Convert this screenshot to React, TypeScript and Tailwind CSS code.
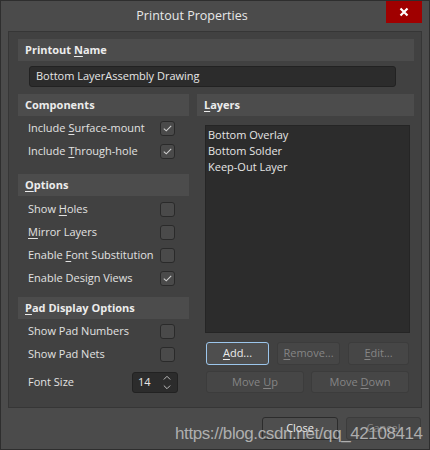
import type { ReactNode } from "react";

const FONT = { fontFamily: '"Open Sans", "Noto Sans", sans-serif' };

function U({ children }: { children: ReactNode }) {
  return <span className="underline decoration-1 underline-offset-[2px]">{children}</span>;
}

function Header({ children }: { children: ReactNode }) {
  return (
    <div className="h-[22px] bg-[#4c4c4c] flex items-center pl-[7px] text-[11px] font-bold text-[#ececec]">
      <span>{children}</span>
    </div>
  );
}

function Check({ checked }: { checked?: boolean }) {
  return (
    <div className="w-[15px] h-[15px] rounded-[3px] border border-[#2a2a2a] bg-[#4a4a4a] flex items-center justify-center">
      {checked && (
        <svg width="9" height="7" viewBox="0 0 9 7" fill="none">
          <path d="M0.8 3.6 L3.3 5.8 L8.2 0.9" stroke="#cfcfcf" strokeWidth="1.1" />
        </svg>
      )}
    </div>
  );
}

function Row({ label, checked }: { label: ReactNode; checked?: boolean }) {
  return (
    <div className="h-[23px] flex items-center justify-between pl-[10px] pr-[14px] text-[11px] text-[#e2e2e2]">
      <span>{label}</span>
      <Check checked={checked} />
    </div>
  );
}

function Btn({
  w,
  h,
  children,
  focused,
  disabled,
}: {
  w: string;
  h: string;
  children: ReactNode;
  focused?: boolean;
  disabled?: boolean;
}) {
  return (
    <div
      className={`${w} ${h} rounded-[3px] flex items-center justify-center text-[11px] ${
        focused
          ? "border border-[#9cc6ec] bg-[#4e4e4e] text-[#ececec]"
          : disabled
          ? "border border-[#3c3c3c] bg-[#464646] text-[#858585]"
          : "border border-[#2c2c2c] bg-[#4e4e4e] text-[#ececec]"
      }`}
    >
      <span>{children}</span>
    </div>
  );
}

export default function App() {
  return (
    <div
      className="relative w-[430px] h-[450px] bg-[#4b4b4b] border border-[#2e2e2e] overflow-hidden"
      style={FONT}
    >
      {/* Title bar */}
      <div className="relative h-[30px] flex items-center justify-center pr-[46px] text-[12.5px] text-[#e8e8e8]">
        <span>Printout Properties</span>
        <div className="absolute right-[7px] top-0 w-[36px] h-[22px] bg-[#a00000] flex items-center justify-center">
          <svg width="10" height="10" viewBox="0 0 10 10">
            <path d="M1.5 1.5 L8.5 8.5 M8.5 1.5 L1.5 8.5" stroke="#ffffff" strokeWidth="2.2" />
          </svg>
        </div>
      </div>

      {/* Main panel */}
      <div className="mx-[7px] h-[377px] border border-[#363636] bg-[#414141] pl-[9px] pr-[7px] pt-[7px]">
        <Header>
          Printout <U>N</U>ame
        </Header>
        <div className="mt-[5px] ml-[11px] w-[367px] h-[21px] rounded-[3px] bg-[#2c2c2c] border border-[#222222] flex items-center pl-[6px] text-[11px] text-[#e6e6e6]">
          <span>Bottom LayerAssembly Drawing</span>
        </div>

        <div className="mt-[7px] flex gap-[8px]">
          {/* Left column */}
          <div className="w-[171px]">
            <Header>Components</Header>
            <div className="mt-[1px]">
              <Row
                label={
                  <>
                    Include <U>S</U>urface-mount
                  </>
                }
                checked
              />
              <Row
                label={
                  <>
                    Include <U>T</U>hrough-hole
                  </>
                }
                checked
              />
            </div>

            <div className="mt-[11px]">
              <Header>
                <U>O</U>ptions
              </Header>
            </div>
            <div className="mt-[2px]">
              <Row
                label={
                  <>
                    Show <U>H</U>oles
                  </>
                }
              />
              <Row
                label={
                  <>
                    <U>M</U>irror Layers
                  </>
                }
              />
              <Row
                label={
                  <>
                    Enable <U>F</U>ont Substitution
                  </>
                }
              />
              <Row label="Enable Design Views" checked />
            </div>

            <div className="mt-[7px]">
              <Header>
                <U>P</U>ad Display Options
              </Header>
            </div>
            <div className="mt-[1px]">
              <Row label="Show Pad Numbers" />
              <Row label="Show Pad Nets" />
            </div>
            <div className="mt-[6px] h-[21px] flex items-center justify-between pl-[10px] pr-[11px] text-[11px] text-[#e2e2e2]">
              <span>Font Size</span>
              <div className="w-[46px] h-[21px] rounded-[3px] bg-[#2c2c2c] border border-[#222222] flex items-center justify-between pl-[5px] pr-[6px]">
                <span className="text-[#e6e6e6]">14</span>
                <svg width="8" height="15" viewBox="0 0 8 15" fill="none">
                  <path d="M0.8 4.5 L4 1.3 L7.2 4.5 M0.8 10.5 L4 13.7 L7.2 10.5" stroke="#bdbdbd" strokeWidth="1" />
                </svg>
              </div>
            </div>
          </div>

          {/* Right column */}
          <div className="flex-1">
            <Header>
              <U>L</U>ayers
            </Header>
            <div className="mt-[9px] ml-[8px] mr-[4px] h-[208px] bg-[#2c2c2c] border border-[#252525] pl-[2px] pt-[1px] text-[11px] leading-[16px] text-[#e6e6e6]">
              <div>Bottom Overlay</div>
              <div>Bottom Solder</div>
              <div>Keep-Out Layer</div>
            </div>
            <div className="mt-[9px] pl-[9px] flex gap-[8px]">
              <Btn w="w-[63px]" h="h-[23px]" focused>
                <U>A</U>dd...
              </Btn>
              <Btn w="w-[63px]" h="h-[23px]" disabled>
                <U>R</U>emove...
              </Btn>
              <Btn w="w-[61px]" h="h-[23px]" disabled>
                <U>E</U>dit...
              </Btn>
            </div>
            <div className="mt-[6px] pl-[9px] flex gap-[7px]">
              <Btn w="w-[98px]" h="h-[22px]" disabled>
                Move <U>U</U>p
              </Btn>
              <Btn w="w-[98px]" h="h-[22px]" disabled>
                Move <U>D</U>own
              </Btn>
            </div>
          </div>
        </div>
      </div>

      {/* Dialog buttons */}
      <div className="mt-[9px] pr-[8px] flex justify-end gap-[8px]">
        <Btn w="w-[76px]" h="h-[23px]">
          Close
        </Btn>
        <Btn w="w-[75px]" h="h-[23px]" disabled>
          Cancel
        </Btn>
      </div>

      {/* Watermark */}
      <div
        className="absolute left-[174px] top-[420px] text-[17px] tracking-[-0.4px] text-[rgba(215,215,215,0.72)] whitespace-nowrap pointer-events-none"
        style={{ fontFamily: '"Liberation Sans", Arial, sans-serif' }}
      >
        https://blog.csdn.net/qq_42108414
      </div>
    </div>
  );
}
